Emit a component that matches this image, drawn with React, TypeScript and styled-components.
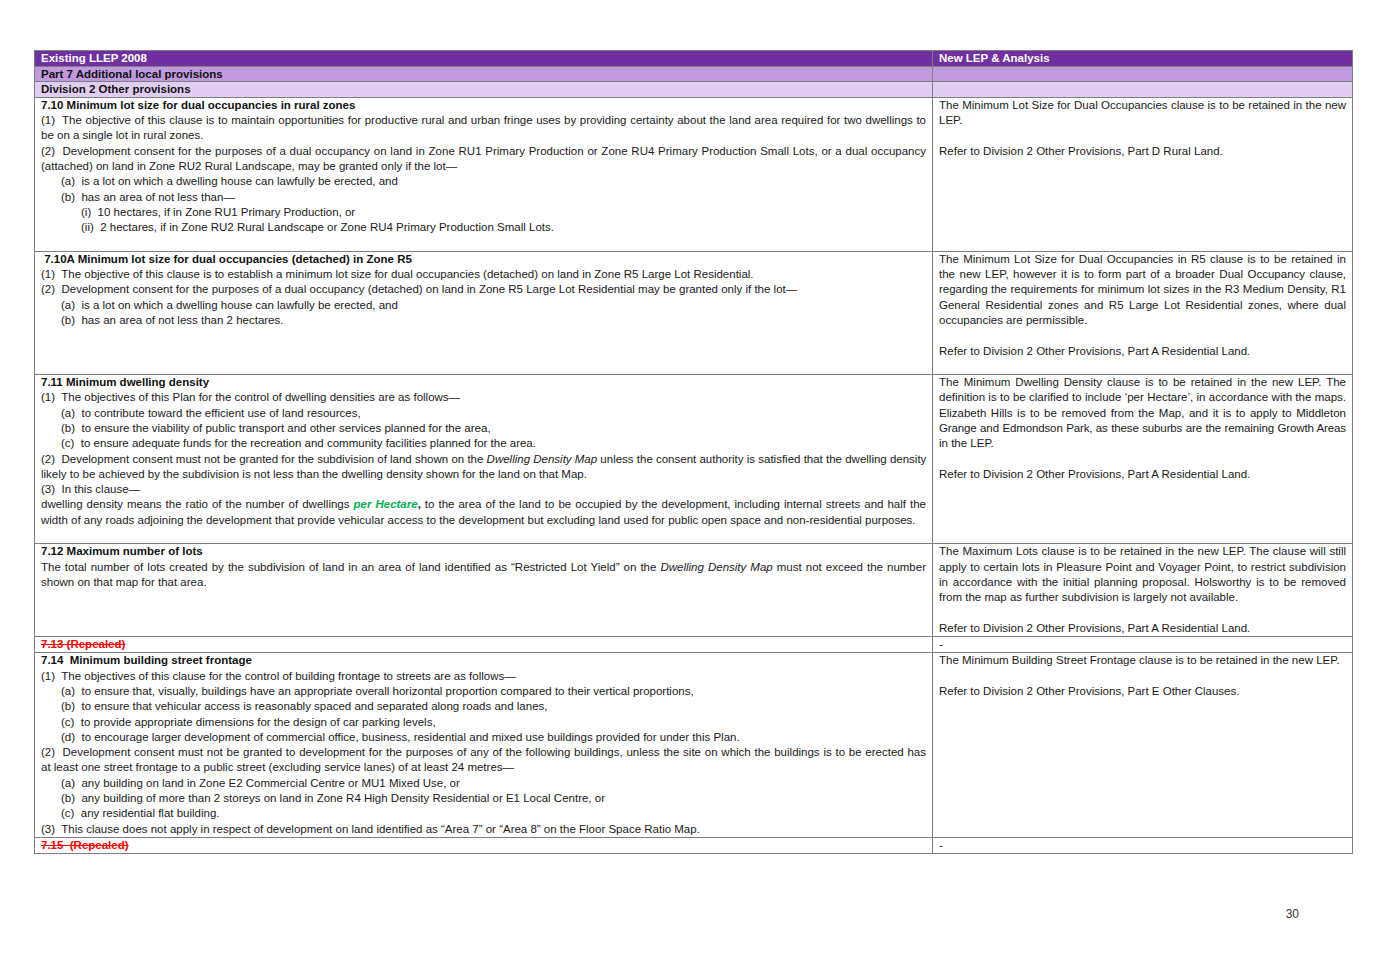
import React from "react";
import styled, { createGlobalStyle } from "styled-components";

const Global = createGlobalStyle`
  html, body { margin: 0; padding: 0; background: #ffffff; }
  body { font-family: "Liberation Sans", Arial, sans-serif; color: #1a1a1a; }
`;

const Page = styled.div`
  width: 1382px;
  min-height: 977px;
  box-sizing: border-box;
  padding: 50px 30px 0 34px;
  display: flex;
  flex-direction: column;
`;

const Table = styled.table`
  width: 1318px;
  border-collapse: collapse;
  table-layout: fixed;
  font-size: 11.5px;
  line-height: 15.29px;
`;

const HeadCell = styled.td<{ $tone: "dark" | "mid" | "light" }>`
  border: 1px solid #7f7f7f;
  padding: 0 6px;
  line-height: 14.6px;
  vertical-align: top;
  font-weight: bold;
  color: ${(p) => (p.$tone === "dark" ? "#ffffff" : "#111111")};
  background: ${(p) =>
    p.$tone === "dark" ? "#7030a0" : p.$tone === "mid" ? "#c09ade" : "#e0cdf1"};
`;

const Cell = styled.td`
  border: 1px solid #7f7f7f;
  padding: 0 6px;
  vertical-align: top;
  color: #1a1a1a;
`;

const P = styled.div<{ $indent?: number }>`
  text-align: justify;
  padding-left: ${(p) => (p.$indent || 0) * 20}px;
  min-height: 15.29px;
`;

/* one printed line of a justified paragraph, stretched edge to edge */
const Line = styled.span<{ $last?: boolean; $tight?: boolean }>`
  display: block;
  white-space: nowrap;
  letter-spacing: ${(p) => (p.$tight ? "-0.12px" : "normal")};
  text-align: ${(p) => (p.$last ? "left" : "justify")};
  text-align-last: ${(p) => (p.$last ? "left" : "justify")};
`;

const Title = styled.div`
  font-weight: bold;
  color: #111111;
  white-space: pre;
`;

const Repealed = styled.div`
  font-weight: bold;
  color: #ff0000;
  text-decoration: line-through;
  white-space: pre;
`;

const Green = styled.span`
  color: #00b050;
  font-weight: bold;
  font-style: italic;
`;

const Em = styled.span`
  font-style: italic;
`;

const Footer = styled.div`
  display: flex;
  justify-content: flex-end;
  padding-right: 53px;
  margin-top: 53px;
  font-size: 12px;
  color: #333333;
`;

const Blank = () => <P />;

export default function App() {
  return (
    <>
      <Global />
      <Page>
        <Table>
          <colgroup>
            <col style={{ width: 898 }} />
            <col style={{ width: 420 }} />
          </colgroup>
          <tbody>
            <tr>
              <HeadCell $tone="dark">Existing LLEP 2008</HeadCell>
              <HeadCell $tone="dark">New LEP &amp; Analysis</HeadCell>
            </tr>
            <tr>
              <HeadCell $tone="mid">Part 7 Additional local provisions</HeadCell>
              <HeadCell $tone="mid" />
            </tr>
            <tr>
              <HeadCell $tone="light">Division 2 Other provisions</HeadCell>
              <HeadCell $tone="light" />
            </tr>

            <tr>
              <Cell>
                <Title>7.10 Minimum lot size for dual occupancies in rural zones</Title>
                <P>
                  (1)&nbsp; The objective of this clause is to maintain opportunities for productive rural and urban fringe uses by providing certainty about the land area required for two dwellings to be on a single lot in rural zones.
                </P>
                <P>
                  (2)&nbsp; Development consent for the purposes of a dual occupancy on land in Zone RU1 Primary Production or Zone RU4 Primary Production Small Lots, or a dual occupancy (attached) on land in Zone RU2 Rural Landscape, may be granted only if the lot—
                </P>
                <P $indent={1}>(a)&nbsp; is a lot on which a dwelling house can lawfully be erected, and</P>
                <P $indent={1}>(b)&nbsp; has an area of not less than—</P>
                <P $indent={2}>(i)&nbsp; 10 hectares, if in Zone RU1 Primary Production, or</P>
                <P $indent={2}>(ii)&nbsp; 2 hectares, if in Zone RU2 Rural Landscape or Zone RU4 Primary Production Small Lots.</P>
                <Blank />
              </Cell>
              <Cell>
                <P>The Minimum Lot Size for Dual Occupancies clause is to be retained in the new LEP.</P>
                <Blank />
                <P>Refer to Division 2 Other Provisions, Part D Rural Land.</P>
              </Cell>
            </tr>

            <tr>
              <Cell>
                <Title> 7.10A Minimum lot size for dual occupancies (detached) in Zone R5</Title>
                <P>
                  (1)&nbsp; The objective of this clause is to establish a minimum lot size for dual occupancies (detached) on land in Zone R5 Large Lot Residential.
                </P>
                <P>
                  (2)&nbsp; Development consent for the purposes of a dual occupancy (detached) on land in Zone R5 Large Lot Residential may be granted only if the lot—
                </P>
                <P $indent={1}>(a)&nbsp; is a lot on which a dwelling house can lawfully be erected, and</P>
                <P $indent={1}>(b)&nbsp; has an area of not less than 2 hectares.</P>
              </Cell>
              <Cell>
                <P>
                  The Minimum Lot Size for Dual Occupancies in R5 clause is to be retained in the new LEP, however it is to form part of a broader Dual Occupancy clause, regarding the requirements for minimum lot sizes in the R3 Medium Density, R1 General Residential zones and R5 Large Lot Residential zones, where dual occupancies are permissible.
                </P>
                <Blank />
                <P>Refer to Division 2 Other Provisions, Part A Residential Land.</P>
                <Blank />
              </Cell>
            </tr>

            <tr>
              <Cell>
                <Title>7.11 Minimum dwelling density</Title>
                <P>(1)&nbsp; The objectives of this Plan for the control of dwelling densities are as follows—</P>
                <P $indent={1}>(a)&nbsp; to contribute toward the efficient use of land resources,</P>
                <P $indent={1}>(b)&nbsp; to ensure the viability of public transport and other services planned for the area,</P>
                <P $indent={1}>(c)&nbsp; to ensure adequate funds for the recreation and community facilities planned for the area.</P>
                <P>
                  <Line>
                    (2)&nbsp; Development consent must not be granted for the subdivision of land shown on the <Em>Dwelling Density Map</Em> unless the consent authority is satisfied that the dwelling density
                  </Line>
                  <Line $last>
                    likely to be achieved by the subdivision is not less than the dwelling density shown for the land on that Map.
                  </Line>
                </P>
                <P>(3)&nbsp; In this clause—</P>
                <P>
                  dwelling density means the ratio of the number of dwellings <Green>per Hectare</Green><b>,</b> to the area of the land to be occupied by the development, including internal streets and half the width of any roads adjoining the development that provide vehicular access to the development but excluding land used for public open space and non-residential purposes.
                </P>
                <Blank />
              </Cell>
              <Cell>
                <P>
                  <Line>The Minimum Dwelling Density clause is to be retained in the new LEP. The</Line>
                  <Line>definition is to be clarified to include ‘per Hectare’, in accordance with the maps.</Line>
                  <Line>Elizabeth Hills is to be removed from the Map, and it is to apply to Middleton</Line>
                  <Line $tight>Grange and Edmondson Park, as these suburbs are the remaining Growth Areas</Line>
                  <Line $last>in the LEP.</Line>
                </P>
                <Blank />
                <P>Refer to Division 2 Other Provisions, Part A Residential Land.</P>
              </Cell>
            </tr>

            <tr>
              <Cell>
                <Title>7.12 Maximum number of lots</Title>
                <P>
                  The total number of lots created by the subdivision of land in an area of land identified as “Restricted Lot Yield” on the <Em>Dwelling Density Map</Em> must not exceed the number shown on that map for that area.
                </P>
              </Cell>
              <Cell>
                <P>
                  The Maximum Lots clause is to be retained in the new LEP. The clause will still apply to certain lots in Pleasure Point and Voyager Point, to restrict subdivision in accordance with the initial planning proposal. Holsworthy is to be removed from the map as further subdivision is largely not available.
                </P>
                <Blank />
                <P>Refer to Division 2 Other Provisions, Part A Residential Land.</P>
              </Cell>
            </tr>

            <tr>
              <Cell>
                <Repealed>7.13 (Repealed)</Repealed>
              </Cell>
              <Cell>
                <P>-</P>
              </Cell>
            </tr>

            <tr>
              <Cell>
                <Title>7.14  Minimum building street frontage</Title>
                <P>(1)&nbsp; The objectives of this clause for the control of building frontage to streets are as follows—</P>
                <P $indent={1}>(a)&nbsp; to ensure that, visually, buildings have an appropriate overall horizontal proportion compared to their vertical proportions,</P>
                <P $indent={1}>(b)&nbsp; to ensure that vehicular access is reasonably spaced and separated along roads and lanes,</P>
                <P $indent={1}>(c)&nbsp; to provide appropriate dimensions for the design of car parking levels,</P>
                <P $indent={1}>(d)&nbsp; to encourage larger development of commercial office, business, residential and mixed use buildings provided for under this Plan.</P>
                <P>
                  <Line>
                    (2)&nbsp; Development consent must not be granted to development for the purposes of any of the following buildings, unless the site on which the buildings is to be erected has
                  </Line>
                  <Line $last>at least one street frontage to a public street (excluding service lanes) of at least 24 metres—</Line>
                </P>
                <P $indent={1}>(a)&nbsp; any building on land in Zone E2 Commercial Centre or MU1 Mixed Use, or</P>
                <P $indent={1}>(b)&nbsp; any building of more than 2 storeys on land in Zone R4 High Density Residential or E1 Local Centre, or</P>
                <P $indent={1}>(c)&nbsp; any residential flat building.</P>
                <P>(3)&nbsp; This clause does not apply in respect of development on land identified as “Area 7” or “Area 8” on the Floor Space Ratio Map.</P>
              </Cell>
              <Cell>
                <P>The Minimum Building Street Frontage clause is to be retained in the new LEP.</P>
                <Blank />
                <P>Refer to Division 2 Other Provisions, Part E Other Clauses.</P>
              </Cell>
            </tr>

            <tr>
              <Cell>
                <Repealed>7.15  (Repealed)</Repealed>
              </Cell>
              <Cell>
                <P>-</P>
              </Cell>
            </tr>
          </tbody>
        </Table>
        <Footer>30</Footer>
      </Page>
    </>
  );
}
